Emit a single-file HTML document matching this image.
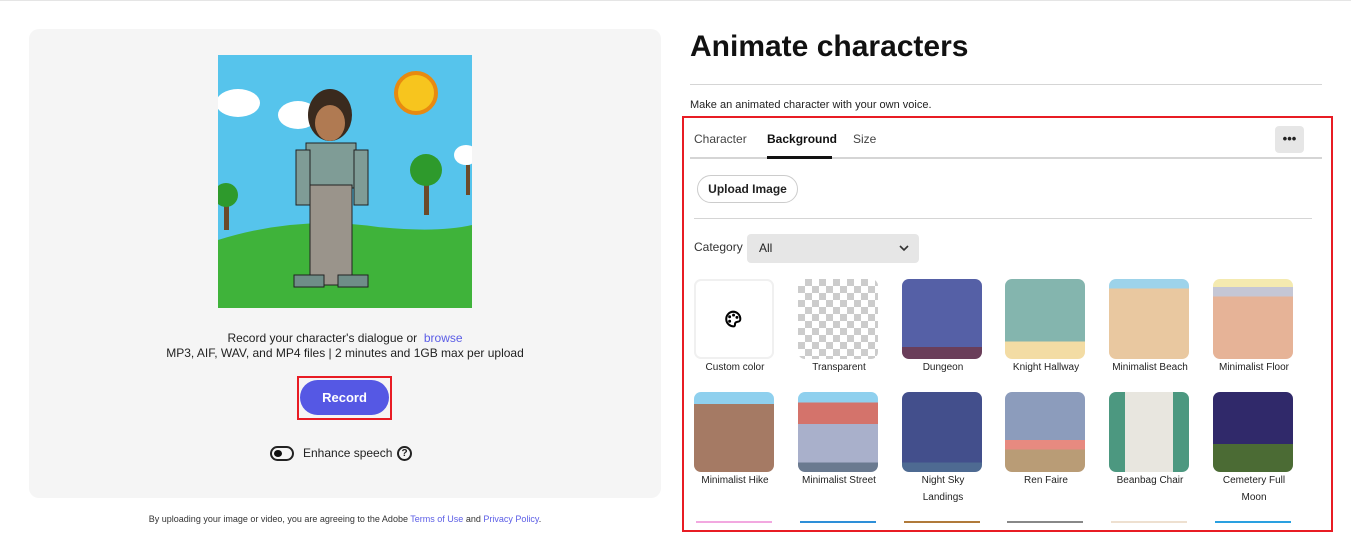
<!DOCTYPE html>
<html><head><style>
*{margin:0;padding:0;box-sizing:border-box}
body{width:1351px;height:548px;background:#fff;font-family:"Liberation Sans",sans-serif;color:#222;position:relative;overflow:hidden}
.abs{position:absolute}
.left{left:29px;top:29px;width:632px;height:469px;background:#f5f5f5;border-radius:10px}
.t{font-size:12px;color:#222;text-align:center}
.th{position:absolute;width:80px;height:80px;border-radius:7px;overflow:hidden}
.lb{position:absolute;width:104px;text-align:center;font-size:10px;color:#222;line-height:17px}
</style></head><body>
<div class="abs" style="left:0;top:0;width:1351px;height:1px;background:#e5e5e5"></div>
<div class="abs left"></div>
<svg class="abs" style="left:218px;top:55px" width="254" height="253" viewBox="0 0 254 253">
<rect width="254" height="253" fill="#56c4ec"/>
<path d="M0 185 Q80 160 160 172 Q220 178 254 170 L254 253 L0 253Z" fill="#3fb33a"/>
<ellipse cx="20" cy="48" rx="22" ry="14" fill="#fff"/><ellipse cx="80" cy="60" rx="20" ry="14" fill="#fff"/>
<ellipse cx="248" cy="100" rx="12" ry="10" fill="#fff"/>
<circle cx="198" cy="38" r="20" fill="#f7c51e" stroke="#e88a10" stroke-width="4"/>
<rect x="206" y="125" width="5" height="35" fill="#6b4a2a"/><circle cx="208" cy="115" r="16" fill="#2e9a2c"/>
<rect x="6" y="150" width="5" height="25" fill="#6b4a2a"/><circle cx="8" cy="140" r="12" fill="#2e9a2c"/>
<rect x="248" y="110" width="4" height="30" fill="#6b4a2a"/>
<ellipse cx="112" cy="60" rx="22" ry="26" fill="#3a2a1e"/><ellipse cx="112" cy="68" rx="15" ry="18" fill="#b07a52"/>
<rect x="88" y="88" width="50" height="45" fill="#7f9c96" stroke="#222"/>
<rect x="92" y="130" width="42" height="100" fill="#9a948b" stroke="#222"/>
<rect x="78" y="95" width="14" height="55" fill="#7f9c96" stroke="#222"/><rect x="136" y="95" width="14" height="55" fill="#7f9c96" stroke="#222"/>
<rect x="76" y="220" width="30" height="12" fill="#6f8d88" stroke="#222"/><rect x="120" y="220" width="30" height="12" fill="#6f8d88" stroke="#222"/>
</svg>
<div class="abs t" style="left:29px;top:331px;width:632px">Record your character's dialogue or &nbsp;<span style="color:#5b5de6">browse</span></div>
<div class="abs t" style="left:29px;top:346px;width:632px">MP3, AIF, WAV, and MP4 files | 2 minutes and 1GB max per upload</div>
<div class="abs" style="left:297px;top:376px;width:95px;height:44px;border:2px solid #e81c24"></div>
<div class="abs" style="left:300px;top:380px;width:89px;height:35px;border-radius:18px;background:#5558e4;color:#fff;font-weight:bold;font-size:13px;text-align:center;line-height:35px">Record</div>
<div class="abs" style="left:270px;top:446px;width:24px;height:15px;border:2px solid #222;border-radius:8px"><div style="position:absolute;left:2px;top:2px;width:8px;height:7px;border-radius:50%;background:#111"></div></div>
<div class="abs" style="left:303px;top:446px;font-size:12px">Enhance speech</div>
<div class="abs" style="left:397px;top:446px;width:15px;height:15px;border:2px solid #222;border-radius:50%;font-size:10px;font-weight:bold;text-align:center;line-height:11px">?</div>
<div class="abs" style="left:29px;top:514px;width:632px;text-align:center;font-size:9px;color:#333">By uploading your image or video, you are agreeing to the Adobe <span style="color:#5b5de6">Terms of Use</span> and <span style="color:#5b5de6">Privacy Policy</span>.</div>

<div class="abs" style="left:690px;top:30px;font-size:30px;font-weight:bold;color:#111">Animate characters</div>
<div class="abs" style="left:690px;top:84px;width:632px;height:1px;background:#d5d5d5"></div>
<div class="abs" style="left:690px;top:99px;font-size:11px">Make an animated character with your own voice.</div>
<div class="abs" style="left:682px;top:116px;width:651px;height:416px;border:2px solid #e81c24"></div>
<div class="abs" style="left:694px;top:132px;font-size:12px;color:#444">Character</div>
<div class="abs" style="left:767px;top:132px;font-size:12px;font-weight:bold;color:#111">Background</div>
<div class="abs" style="left:853px;top:132px;font-size:12px;color:#444">Size</div>
<div class="abs" style="left:690px;top:157px;width:632px;height:2px;background:#d5d5d5"></div>
<div class="abs" style="left:767px;top:156px;width:65px;height:3px;background:#111"></div>
<div class="abs" style="left:1275px;top:126px;width:29px;height:27px;background:#e6e6e6;border-radius:4px;text-align:center;font-weight:bold;font-size:13px;line-height:26px">•••</div>
<div class="abs" style="left:697px;top:175px;width:101px;height:28px;border:1px solid #ccc;border-radius:14px;background:#fff;font-size:12px;font-weight:bold;text-align:center;line-height:26px">Upload Image</div>
<div class="abs" style="left:694px;top:218px;width:618px;height:1px;background:#d5d5d5"></div>
<div class="abs" style="left:694px;top:240px;font-size:12px;color:#333">Category</div>
<div class="abs" style="left:747px;top:234px;width:172px;height:29px;background:#e6e6e6;border-radius:4px;font-size:12px;line-height:29px;padding-left:12px">All<svg style="position:absolute;right:10px;top:11px" width="10" height="7"><path d="M1 1 L5 5 L9 1" stroke="#333" stroke-width="1.6" fill="none"/></svg></div>

<div class="th" style="left:694px;top:279px;background:#fff;border:2px solid #f0f0f0"><svg style="position:absolute;left:28px;top:29px" width="18" height="18" viewBox="0 0 16 16"><path d="M8 1.5A6.5 6.5 0 1 0 9 14.5C10.5 14 9 12 10.5 11 C12 10 14.5 11 14.5 8 A6.5 6.5 0 0 0 8 1.5Z" fill="none" stroke="#000" stroke-width="1.8"/><circle cx="5" cy="6" r="1.3"/><circle cx="8.5" cy="4.5" r="1.3"/><circle cx="5" cy="10" r="1.3"/><circle cx="11.5" cy="6.5" r="1.3"/></svg></div>
<div class="th" style="left:798px;top:279px;background:repeating-conic-gradient(#ccc 0 25%,#fff 0 50%) 0 0/14px 14px"></div>
<div class="th" style="left:902px;top:279px;background:linear-gradient(#5560a6 0 85%,#6a3e5a 85%)"></div>
<div class="th" style="left:1005px;top:279px;background:linear-gradient(#84b5ae 0 78%,#f3dca4 78%)"></div>
<div class="th" style="left:1109px;top:279px;background:linear-gradient(#9dd3ea 0 12%,#e9c8a0 12%)"></div>
<div class="th" style="left:1213px;top:279px;background:linear-gradient(#f4eab0 0 10%,#c5c7d5 10% 22%,#e6b397 22%)"></div>
<div class="lb" style="left:683px;top:359px">Custom color</div>
<div class="lb" style="left:787px;top:359px">Transparent</div>
<div class="lb" style="left:891px;top:359px">Dungeon</div>
<div class="lb" style="left:994px;top:359px">Knight Hallway</div>
<div class="lb" style="left:1098px;top:359px">Minimalist Beach</div>
<div class="lb" style="left:1202px;top:359px">Minimalist Floor</div>

<div class="th" style="left:694px;top:392px;background:linear-gradient(#8fd0ee 0 15%,#a57a64 15%)"></div>
<div class="th" style="left:798px;top:392px;background:linear-gradient(#8fd0ee 0 13%,#d4736b 13% 40%,#a9b0cb 40% 88%,#6a7a90 88%)"></div>
<div class="th" style="left:902px;top:392px;background:linear-gradient(#434f8c 0 88%,#4e6a92 88%)"></div>
<div class="th" style="left:1005px;top:392px;background:linear-gradient(#8c9cbc 0 60%,#e78a80 60% 72%,#b99c76 72%)"></div>
<div class="th" style="left:1109px;top:392px;background:linear-gradient(90deg,#4c9880 0 20%,#e8e6df 20% 80%,#4c9880 80%)"></div>
<div class="th" style="left:1213px;top:392px;background:linear-gradient(#30296a 0 65%,#4b6b34 65%)"></div>
<div class="lb" style="left:683px;top:472px">Minimalist Hike</div>
<div class="lb" style="left:787px;top:472px">Minimalist Street</div>
<div class="lb" style="left:891px;top:472px">Night Sky<br>Landings</div>
<div class="lb" style="left:994px;top:472px">Ren Faire</div>
<div class="lb" style="left:1098px;top:472px">Beanbag Chair</div>
<div class="lb" style="left:1202px;top:472px">Cemetery Full<br>Moon</div>

<div class="abs" style="left:696px;top:521px;width:76px;height:2px;background:#f2a8e0"></div>
<div class="abs" style="left:800px;top:521px;width:76px;height:2px;background:#2e8fd8"></div>
<div class="abs" style="left:904px;top:521px;width:76px;height:2px;background:#b07a3a"></div>
<div class="abs" style="left:1007px;top:521px;width:76px;height:2px;background:#888"></div>
<div class="abs" style="left:1111px;top:521px;width:76px;height:2px;background:#eee0d0"></div>
<div class="abs" style="left:1215px;top:521px;width:76px;height:2px;background:#2aa0e0"></div>
</body></html>
